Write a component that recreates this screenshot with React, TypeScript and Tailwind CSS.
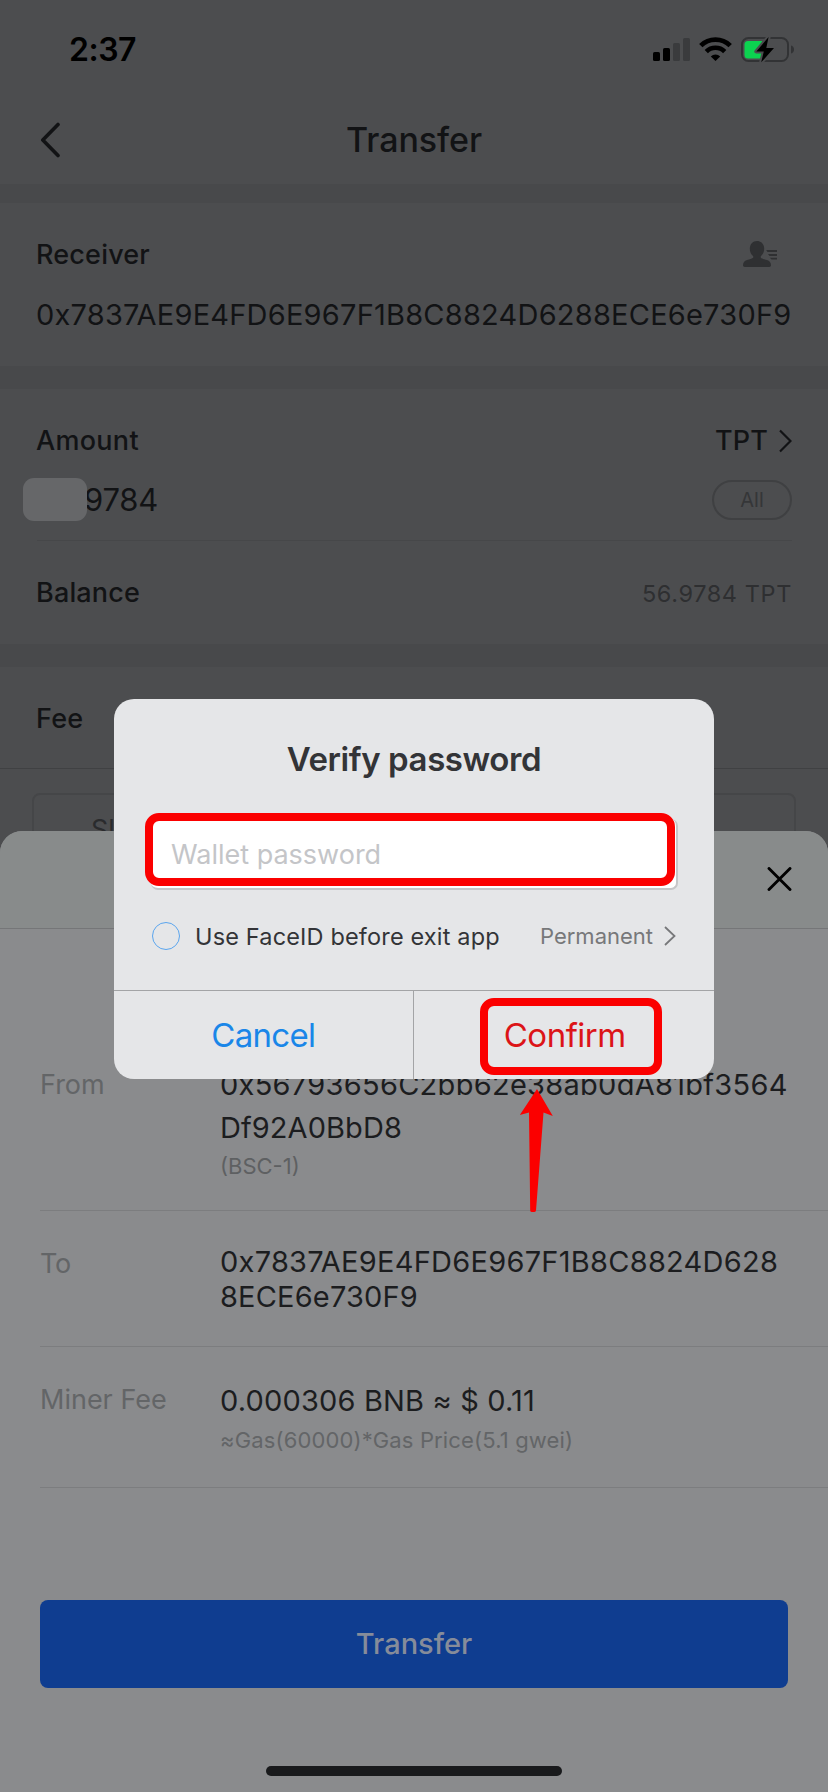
import type { ReactNode } from "react";

function StatusIcons() {
  return (
    <svg className="h-[27px] w-[142px]" viewBox="653 36 142 27" fill="none">
      <rect x="653" y="52" width="7" height="9" rx="1.6" fill="#000" />
      <rect x="663" y="48" width="7" height="13" rx="1.6" fill="#000" />
      <rect x="673" y="43" width="7" height="18" rx="1.6" fill="#3a3b3d" />
      <rect x="683" y="38" width="7" height="23" rx="1.6" fill="#3a3b3d" />
      <path d="M700.8 45.6A21 21 0 0 1 730.2 45.600" stroke="#000" strokeWidth="4.800" />
      <path d="M706.3 51.600A13 13 0 0 1 724.7 51.600" stroke="#000" strokeWidth="4.600" />
      <path d="M710.8 56.4A6.8 6.8 0 0 1 720.2 56.4L715.5 61Z" fill="#000" />
      <rect x="742" y="38" width="46" height="23" rx="6.5" stroke="#323335" strokeWidth="2" />
      <path d="M791 45.5c2 .6 3 2 3 4s-1 3.4-3 4z" fill="#323335" />
      <path d="M748 41H762V58.500H748a3.500 3.500 0 0 1-3.500-3.500V44.500A3.500 3.500 0 0 1 748 41Z" fill="#0cd350" />
      <path
        d="M768.600 37 756.300 51.500H763.800L761.200 62.300 774 48H766.300Z"
        fill="#000"
        stroke="#4c4d4f"
        strokeWidth="4"
        strokeLinejoin="round"
        paintOrder="stroke"
      />
    </svg>
  );
}

function ContactIcon() {
  return (
    <svg className="h-[28px] w-[36px]" viewBox="742 240 36 28" fill="#2f3032">
      <path d="M757 241c4.300 0 7.200 3.300 7.200 7.800 0 3.200-1.400 5.800-3.400 7.300v1.700c1 .9 3.700 1.400 6.200 2.300 2.700 1 4 2.500 4 5.200 0 1-.7 1.700-1.800 1.700h-24.400c-1.100 0-1.800-.7-1.800-1.700 0-2.700 1.300-4.200 4-5.200 2.500-.9 5.200-1.400 6.200-2.300v-1.700c-2-1.500-3.400-4.100-3.400-7.300 0-4.500 2.900-7.800 7.200-7.800Z" />
      <path d="M766.200 250.100H777v1.900H767.500ZM768 254H777v1.900H769.500ZM769.800 257.700H777v1.900H771.500Z" />
    </svg>
  );
}

function Band({ h }: { h: "sm" | "lg" }) {
  return <div className={h === "sm" ? "h-[19px] bg-[#48494b]" : "h-[23px] bg-[#48494b]"} />;
}

function SheetRow({ label, className, labelClass, children }: { label: string; className: string; labelClass: string; children: ReactNode }) {
  return (
    <div className={`ml-10 flex border-b border-[#7c7d7f] ${className}`}>
      <div className={`w-[180px] shrink-0 text-[27px] text-[#636567] ${labelClass}`}>{label}</div>
      <div className="whitespace-nowrap text-[29px] text-[#1c1d1f]">{children}</div>
    </div>
  );
}

function TransferScreen() {
  return (
    <div className="text-[#121315]">
      <div className="flex h-[99px] items-center justify-between pr-[33px] pl-[69px]">
        <span className="pt-px text-[32px] font-semibold tracking-[-0.5px] text-black">2:37</span>
        <StatusIcons />
      </div>
      <div className="grid h-[85px] grid-cols-[100px_1fr_100px] items-center pb-[5px]">
        <svg className="mt-[2px] ml-[40px] h-[36px] w-[21px]" viewBox="0 0 21 36" fill="none" stroke="#121315" strokeWidth="3.600" strokeLinecap="round" strokeLinejoin="round">
          <path d="M18 2.500 2.800 18 18 33.500" />
        </svg>
        <h1 className="text-center text-[34px] font-[450] tracking-[-0.06px]">Transfer</h1>
      </div>
      <Band h="sm" />
      <div className="h-[163px] pt-[31px] pr-9 pl-9">
        <div className="flex h-10 items-center justify-between pr-[14px]">
          <span className="pt-[2px] text-[27px] font-[500] tracking-[0.18px]">Receiver</span>
          <ContactIcon />
        </div>
        <div className="mt-5 flex h-10 items-center pt-px text-[29px] tracking-[0.22px] whitespace-nowrap">
          0x7837AE9E4FD6E967F1B8C8824D6288ECE6e730F9
        </div>
      </div>
      <Band h="lg" />
      <div className="pt-[31px]">
        <div className="flex h-[41px] items-center justify-between pr-9 pl-9 text-[27px] font-[500]">
          <span className="pt-px tracking-[0.3px]">Amount</span>
          <span className="flex items-center gap-[11px] tracking-[0.1px]">
            <span className="pt-[2px]">TPT</span>
            <svg className="h-[24px] w-[13px]" viewBox="0 0 13 24" fill="none" stroke="#121315" strokeWidth="2.200">
              <path d="M1 1.500 11.500 12 1 22.500" />
            </svg>
          </span>
        </div>
        <div className="relative mt-[19px] flex h-10 items-center justify-between pr-9 pl-[84px]">
          <span className="text-[31px] tracking-[-0.2px]">9784</span>
          <span className="absolute top-[-2px] left-[23px] h-[43px] w-[64px] rounded-[11px] bg-[#666769]" />
          <span className="flex h-10 w-[80px] items-center justify-center rounded-full border-2 border-[#3f4042] text-[20px] text-[#353638]">All</span>
        </div>
        <div className="mt-5 mr-9 ml-[37px] h-px bg-[#464749]" />
        <div className="flex h-[103px] items-center justify-between pt-[2px] pr-[36px] pl-9">
          <span className="text-[27px] font-[500] tracking-[0.16px]">Balance</span>
          <span className="text-[23.5px] tracking-[0.6px] text-[#2e2f31]">56.9784 TPT</span>
        </div>
      </div>
      <Band h="lg" />
      <div className="flex h-[101px] items-center pt-[3px] pl-9 text-[27px] font-[500] tracking-[0.2px]">Fee</div>
      <div className="h-px bg-[#404143]" />
      <div className="mx-8 mt-6 h-[200px] rounded-[8px] border-2 border-[#454648] pl-[57px] text-[27px] leading-[70px] text-[#2a2b2d]">
        Slow
      </div>
    </div>
  );
}

function ConfirmSheet() {
  return (
    <div className="absolute inset-x-0 top-[831px] bottom-0 overflow-hidden rounded-t-[22px] bg-[#8a8b8d]">
      <div className="flex h-[98px] items-center justify-end border-b border-[#757678] bg-[#888b8b] pr-[36px] pb-px">
        <svg className="h-[24px] w-[25px]" viewBox="0 0 25 24" fill="none" stroke="#000" strokeWidth="2.900" strokeLinecap="round">
          <path d="M2 1.500 23 22.500M23 1.500 2 22.500" />
        </svg>
      </div>
      <SheetRow label="From" className="pt-[134px] pb-[26px]" labelClass="leading-[44px]">
        <div className="leading-[43px] tracking-[0.28px]">0x56793656C2bb62e38ab0dA81bf3564</div>
        <div className="leading-[43px] tracking-[0.07px]">Df92A0BbD8</div>
        <div className="text-[22px] leading-[35px] text-[#5e6062]">(BSC-1)</div>
      </SheetRow>
      <SheetRow label="To" className="pt-[33px] pb-[32px]" labelClass="pt-px leading-[37px] tracking-[-0.3px]">
        <div className="leading-[35px] tracking-[0.26px]">0x7837AE9E4FD6E967F1B8C8824D628</div>
        <div className="leading-[35px] tracking-[0.17px]">8ECE6e730F9</div>
      </SheetRow>
      <SheetRow label="Miner Fee" className="pt-[33px] pb-[28px]" labelClass="leading-[39px]">
        <div className="leading-[41px] tracking-[0.17px]">0.000306 BNB ≈ $ 0.11</div>
        <div className="text-[22px] leading-[38px] tracking-[0.15px] text-[#636567]">≈Gas(60000)*Gas Price(5.1 gwei)</div>
      </SheetRow>
      <button className="mx-10 mt-[112px] flex h-[88px] w-[748px] items-center justify-center rounded-[8px] bg-[#0f3d90] text-[29px] font-[450] text-[#868c9a]">
        Transfer
      </button>
      <div className="mx-auto mt-[78px] h-[10px] w-[296px] rounded-full bg-[#191a1c]" />
    </div>
  );
}

function PasswordDialog() {
  return (
    <div className="absolute top-[699px] left-[114px] h-[380px] w-[600px] rounded-[20px] bg-[#e5e6e8]">
      <h2 className="flex h-[120px] items-center justify-center pt-px text-[33px] font-semibold tracking-[-0.42px] text-[#333437]">Verify password</h2>
      <div className="mr-[36px] ml-[37px] flex h-[71px] items-center rounded-[7px] border-r-2 border-b-2 border-[#c6c6c8] bg-white pt-[4px] pl-[20px] text-[27px] text-[#c4c5c8]">
        Wallet password
      </div>
      <div className="mb-2 flex h-[92px] items-center pr-[38px] pl-[38px]">
        <span className="size-[28px] rounded-full border-[1.500px] border-[#5aa5ee]" />
        <span className="ml-[15px] pt-px text-[23.5px] tracking-[0.16px] whitespace-nowrap text-[#333437]">Use FaceID before exit app</span>
        <span className="ml-auto text-[22px] text-[#77787a]">Permanent</span>
        <svg className="ml-[11px] h-[20px] w-[12px]" viewBox="0 0 12 20" fill="none" stroke="#77787a" strokeWidth="1.800">
          <path d="M1 1 10.500 10 1 19" />
        </svg>
      </div>
      <div className="flex h-[89px] items-stretch border-t border-[#a3a4a6] text-[33px]">
        <button className="flex-1 border-r border-[#a3a4a6] pt-px tracking-[-0.7px] text-[#1a86e8]">Cancel</button>
        <button className="flex-1 pt-px pl-[2px] tracking-[-0.5px] text-[#dc1418]">Confirm</button>
      </div>
    </div>
  );
}

export default function App() {
  return (
    <div className="relative h-[1792px] w-[828px] overflow-hidden bg-[#4c4d4f] font-['Inter','Noto_Sans',sans-serif]">
      <TransferScreen />
      <ConfirmSheet />
      <PasswordDialog />
      <div className="absolute top-[813px] left-[145px] h-[73px] w-[530px] rounded-[14px] border-8 border-[#fb0000]" />
      <div className="absolute top-[998px] left-[480px] h-[77px] w-[182px] rounded-[14px] border-8 border-[#fb0000]" />
      <svg className="absolute top-[1088px] left-[518px] h-[126px] w-[38px]" viewBox="518 1088 38 126" fill="#fb0000">
        <path d="M537 1089 552.800 1116 543.500 1112.500 536 1210.500Q535.700 1212 534 1212H532Q530.300 1212 530.200 1210.500L529 1112.500 519.800 1115Z" />
      </svg>
    </div>
  );
}
